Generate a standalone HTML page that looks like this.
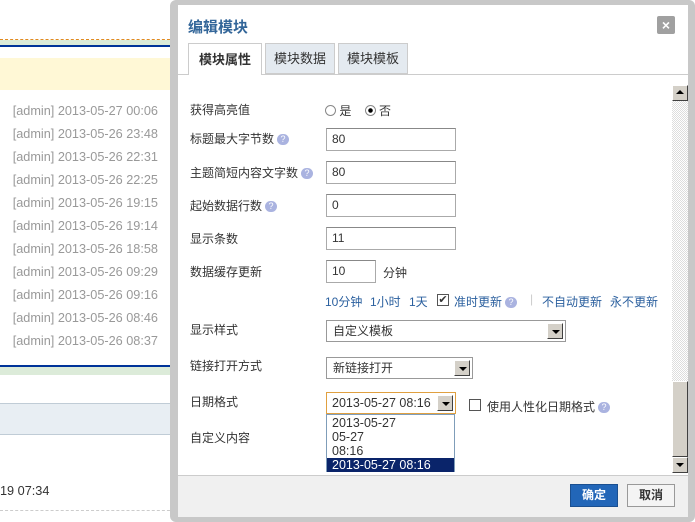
<!DOCTYPE html>
<html><head><meta charset="utf-8"><style>
*{margin:0;padding:0;box-sizing:border-box}
body{width:695px;height:522px;overflow:hidden;position:relative;background:#fff;font-family:"Liberation Sans","Noto Sans CJK SC",sans-serif;font-size:12px;color:#333}
.a{position:absolute;white-space:nowrap}
.row{position:absolute;right:537px;color:#999;font-size:12.7px;white-space:nowrap}
.lbl{position:absolute;left:190px;font-size:12px;color:#333}
.inp{position:absolute;border:1px solid #aaa;border-top-color:#888;background:#fff;height:23px;padding-left:5px;line-height:21px;font-size:12px}
.q{display:inline-block;width:12px;height:11px;border-radius:6px;background:#aab3e0;color:#fff;font-size:9px;line-height:11px;text-align:center;vertical-align:middle;margin-left:3px}
.sel{position:absolute;border:1px solid #999;background:#fff;height:22px;line-height:20px;padding-left:6px}
.arr{position:absolute;right:2px;top:2px;width:16px;height:16px;background:#d4d0c8;border:1px solid;border-color:#fff #404040 #404040 #fff}
.arr:after{content:"";position:absolute;left:4px;top:6px;border:4px solid transparent;border-top:4px solid #000;border-bottom:0}
.lk{color:#2a5f9e;position:absolute;top:293px;font-size:12px}
</style></head><body>
<div class="a" style="left:0;top:39px;width:175px;border-top:1px dashed #e08a20"></div>
<div class="a" style="left:0;top:40px;width:175px;height:6px;background:#dcebd9"></div>
<div class="a" style="left:0;top:45px;width:175px;height:2px;background:#003399"></div>
<div class="a" style="left:0;top:58px;width:175px;height:32px;background:#fff8d6"></div>
<div class="a" style="left:174px;top:52px;width:3px;height:304px;background:#d98a10"></div>
<div class="row" style="top:104px">[admin] 2013-05-27 00:06</div>
<div class="row" style="top:127px">[admin] 2013-05-26 23:48</div>
<div class="row" style="top:150px">[admin] 2013-05-26 22:31</div>
<div class="row" style="top:173px">[admin] 2013-05-26 22:25</div>
<div class="row" style="top:196px">[admin] 2013-05-26 19:15</div>
<div class="row" style="top:219px">[admin] 2013-05-26 19:14</div>
<div class="row" style="top:242px">[admin] 2013-05-26 18:58</div>
<div class="row" style="top:265px">[admin] 2013-05-26 09:29</div>
<div class="row" style="top:288px">[admin] 2013-05-26 09:16</div>
<div class="row" style="top:311px">[admin] 2013-05-26 08:46</div>
<div class="row" style="top:334px">[admin] 2013-05-26 08:37</div>
<div class="a" style="left:0;top:365px;width:175px;height:2px;background:#003399"></div>
<div class="a" style="left:0;top:367px;width:175px;height:8px;background:#dcebd9"></div>
<div class="a" style="left:0;top:403px;width:175px;height:32px;background:#e8eef3;border-top:1px solid #c0ccd6;border-bottom:1px solid #c0ccd6"></div>
<div class="a" style="left:0;top:484px;color:#333;font-size:12.7px">19 07:34</div>
<div class="a" style="left:0;top:510px;width:175px;border-top:1px dashed #ccc"></div>

<div class="a" style="left:170px;top:0;width:525px;height:522px;background:#c8c8c8;border-radius:6px"></div>
<div class="a" style="left:178px;top:5px;width:510px;height:512px;background:#fff"></div>
<div class="a" style="left:188px;top:16px;font-size:15px;font-weight:bold;color:#336699">编辑模块</div>
<div class="a" style="left:657px;top:16px;width:18px;height:18px;background:#a0a0a0;border-radius:2px;color:#fff;font-weight:bold;text-align:center;line-height:18px;font-size:14px">×</div>
<div class="a" style="left:178px;top:74px;width:510px;border-top:1px solid #ccc"></div>
<div class="a" style="left:188px;top:43px;width:74px;height:32px;background:#fff;border:1px solid #ccc;border-bottom:0;text-align:center;line-height:32px;font-weight:bold;font-size:13px">模块属性</div>
<div class="a" style="left:265px;top:43px;width:70px;height:31px;background:#e4eaf0;border:1px solid #ccc;text-align:center;line-height:30px;font-size:13px">模块数据</div>
<div class="a" style="left:338px;top:43px;width:70px;height:31px;background:#e4eaf0;border:1px solid #ccc;text-align:center;line-height:30px;font-size:13px">模块模板</div>

<div class="a" style="left:672px;top:85px;width:16px;height:388px;background:repeating-conic-gradient(#ddd 0 25%,#fff 0 50%) 0 0/2px 2px"></div>
<div class="a" style="left:672px;top:85px;width:16px;height:16px;background:#d4d0c8;border:1px solid;border-color:#fff #404040 #404040 #fff"></div>
<div class="a" style="left:676px;top:90px;border:4px solid transparent;border-bottom:4px solid #000;border-top:0"></div>
<div class="a" style="left:672px;top:381px;width:16px;height:76px;background:#d4d0c8;border:1px solid;border-color:#fff #404040 #404040 #fff"></div>
<div class="a" style="left:672px;top:457px;width:16px;height:16px;background:#d4d0c8;border:1px solid;border-color:#fff #404040 #404040 #fff"></div>
<div class="a" style="left:676px;top:463px;border:4px solid transparent;border-top:4px solid #000;border-bottom:0"></div>

<div class="lbl" style="top:101px">获得高亮值</div>
<div class="a" style="left:325px;top:102px;font-size:12px"><span style="display:inline-block;width:11px;height:11px;border:1px solid #888;border-radius:6px;vertical-align:-1px"></span> 是 &nbsp;&nbsp;&nbsp;<span style="display:inline-block;width:11px;height:11px;border:1px solid #888;border-radius:6px;vertical-align:-1px;background:radial-gradient(#000 2px,#fff 2.5px)"></span> 否</div>
<div class="lbl" style="top:130px">标题最大字节数<span class="q">?</span></div>
<div class="inp" style="left:326px;top:128px;width:130px">80</div>
<div class="lbl" style="top:164px">主题简短内容文字数<span class="q">?</span></div>
<div class="inp" style="left:326px;top:161px;width:130px">80</div>
<div class="lbl" style="top:197px">起始数据行数<span class="q">?</span></div>
<div class="inp" style="left:326px;top:194px;width:130px">0</div>
<div class="lbl" style="top:230px">显示条数</div>
<div class="inp" style="left:326px;top:227px;width:130px">11</div>
<div class="lbl" style="top:263px">数据缓存更新</div>
<div class="inp" style="left:326px;top:260px;width:50px">10</div>
<div class="a" style="left:383px;top:264px">分钟</div>
<span class="lk" style="left:325px">10分钟</span>
<span class="lk" style="left:370px">1小时</span>
<span class="lk" style="left:409px">1天</span>
<span class="a" style="left:437px;top:294px;width:12px;height:12px;border:1px solid #555;font-size:11px;line-height:10px;text-align:center">✔</span>
<span class="lk" style="left:454px">准时更新<span class="q">?</span></span>
<span class="a" style="left:530px;top:292px;color:#ccc">|</span>
<span class="lk" style="left:542px">不自动更新</span>
<span class="lk" style="left:610px">永不更新</span>
<div class="lbl" style="top:321px">显示样式</div>
<div class="sel" style="left:326px;top:320px;width:240px">自定义模板<div class="arr"></div></div>
<div class="lbl" style="top:357px">链接打开方式</div>
<div class="sel" style="left:326px;top:357px;width:147px">新链接打开<div class="arr"></div></div>
<div class="lbl" style="top:393px">日期格式</div>
<div class="sel" style="left:326px;top:392px;width:130px;border-color:#e0a040;padding-left:5px;font-size:12.5px">2013-05-27 08:16<div class="arr" style="border-top:1px solid #fff"></div></div>
<div class="a" style="left:326px;top:414px;width:129px;height:58px;border:1px solid #7f9db9;background:#fff;line-height:14px;padding-top:1px;font-size:12.5px">
<div style="padding-left:5px">2013-05-27</div><div style="padding-left:5px">05-27</div><div style="padding-left:5px">08:16</div><div style="padding-left:5px;background:#0a246a;color:#fff">2013-05-27 08:16</div></div>
<div class="a" style="left:469px;top:399px;width:12px;height:12px;border:1px solid #555"></div>
<div class="a" style="left:487px;top:398px">使用人性化日期格式<span class="q">?</span></div>
<div class="lbl" style="top:429px">自定义内容</div>

<div class="a" style="left:178px;top:475px;width:510px;height:42px;background:#f0f0f0;border-top:1px solid #ccc"></div>
<div class="a" style="left:570px;top:484px;width:48px;height:23px;background:#2266b8;border:1px solid #1a4f90;color:#fff;font-weight:bold;text-align:center;line-height:21px">确定</div>
<div class="a" style="left:627px;top:484px;width:48px;height:23px;background:#f4f4f4;border:1px solid #999;color:#333;font-weight:bold;text-align:center;line-height:21px">取消</div>
</body></html>
